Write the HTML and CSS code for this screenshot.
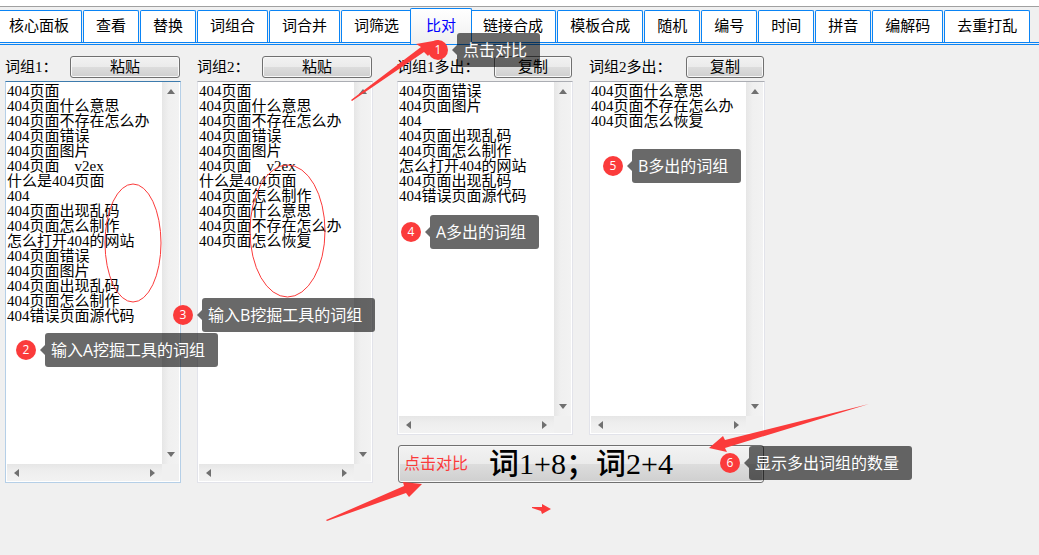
FILE: index.html
```html
<!DOCTYPE html>
<html lang="zh-CN">
<head>
<meta charset="utf-8">
<title>比对</title>
<link rel="stylesheet" href="styles.css">
</head>
<body>
<svg class="symbols" aria-hidden="true">
  <symbol id="up" viewBox="0 0 8 5"><path d="M0 5 4 0 8 5z"/></symbol>
  <symbol id="down" viewBox="0 0 8 5"><path d="M0 0h8L4 5z"/></symbol>
  <symbol id="left" viewBox="0 0 5 8"><path d="M5 0v8L0 4z"/></symbol>
  <symbol id="right" viewBox="0 0 5 8"><path d="M0 0l5 4-5 4z"/></symbol>
</svg>

<nav class="tabs" role="tablist">
  <button class="tab" role="tab">核心面板</button>
  <button class="tab" role="tab">查看</button>
  <button class="tab" role="tab">替换</button>
  <button class="tab" role="tab">词组合</button>
  <button class="tab" role="tab">词合并</button>
  <button class="tab" role="tab">词筛选</button>
  <button class="tab tab-active" role="tab" aria-selected="true">比对</button>
  <button class="tab" role="tab">链接合成</button>
  <button class="tab" role="tab">模板合成</button>
  <button class="tab" role="tab">随机</button>
  <button class="tab" role="tab">编号</button>
  <button class="tab" role="tab">时间</button>
  <button class="tab" role="tab">拼音</button>
  <button class="tab" role="tab">编解码</button>
  <button class="tab" role="tab">去重打乱</button>
</nav>

<main class="board">
  <div class="pair">
    <section class="column">
      <div class="head"><label for="a">词组1：</label><button class="btn btn-paste">粘贴</button></div>
      <div class="frame frame-focus">
        <textarea class="words" id="a" rows="22" wrap="off" spellcheck="false">404页面
404页面什么意思
404页面不存在怎么办
404页面错误
404页面图片
404页面　v2ex
什么是404页面
404
404页面出现乱码
404页面怎么制作
怎么打开404的网站
404页面错误
404页面图片
404页面出现乱码
404页面怎么制作
404错误页面源代码</textarea>
        <div class="bar bar-v"><svg class="arrow-v"><use href="#up"/></svg><svg class="arrow-v"><use href="#down"/></svg></div>
        <div class="bar bar-h"><svg class="arrow-h"><use href="#left"/></svg><svg class="arrow-h"><use href="#right"/></svg></div>
      </div>
    </section>
    <section class="column">
      <div class="head"><label for="b">词组2：</label><button class="btn btn-paste">粘贴</button></div>
      <div class="frame">
        <textarea class="words" id="b" rows="22" wrap="off" spellcheck="false">404页面
404页面什么意思
404页面不存在怎么办
404页面错误
404页面图片
404页面　v2ex
什么是404页面
404页面怎么制作
404页面什么意思
404页面不存在怎么办
404页面怎么恢复</textarea>
        <div class="bar bar-v"><svg class="arrow-v"><use href="#up"/></svg><svg class="arrow-v"><use href="#down"/></svg></div>
        <div class="bar bar-h"><svg class="arrow-h"><use href="#left"/></svg><svg class="arrow-h"><use href="#right"/></svg></div>
      </div>
    </section>
  </div>

  <div class="result">
    <div class="pair">
      <section class="column">
        <div class="head"><label for="c">词组1多出：</label><button class="btn btn-copy">复制</button></div>
        <div class="frame">
          <textarea class="words" id="c" rows="22" wrap="off" spellcheck="false">404页面错误
404页面图片
404
404页面出现乱码
404页面怎么制作
怎么打开404的网站
404页面出现乱码
404错误页面源代码</textarea>
          <div class="bar bar-v"><svg class="arrow-v"><use href="#up"/></svg><svg class="arrow-v"><use href="#down"/></svg></div>
          <div class="bar bar-h"><svg class="arrow-h"><use href="#left"/></svg><svg class="arrow-h"><use href="#right"/></svg></div>
        </div>
      </section>
      <section class="column">
        <div class="head"><label for="d">词组2多出：</label><button class="btn btn-copy">复制</button></div>
        <div class="frame">
          <textarea class="words" id="d" rows="22" wrap="off" spellcheck="false">404页面什么意思
404页面不存在怎么办
404页面怎么恢复</textarea>
          <div class="bar bar-v"><svg class="arrow-v"><use href="#up"/></svg><svg class="arrow-v"><use href="#down"/></svg></div>
          <div class="bar bar-h"><svg class="arrow-h"><use href="#left"/></svg><svg class="arrow-h"><use href="#right"/></svg></div>
        </div>
      </section>
    </div>
    <button class="btn btn-compare">词1+8；词2+4</button>
  </div>
</main>

<div class="notes">
  <svg class="marks" width="1039" height="555" aria-hidden="true">
    <g fill="none" stroke="#fb3b3b">
      <ellipse cx="133" cy="243" rx="28" ry="59"/>
      <ellipse cx="287.5" cy="231" rx="37.5" ry="66"/>
    </g>
    <g fill="#fb3b3b">
      <path d="M351 100 421 47 416 44 439 40 428 56 424 52 352 101z"/>
      <path d="M326 520 404 486 403 482 422 484 409 497 406 493 327 521z"/>
      <path d="M869 404 725 440 723 436 709 448 727 452 725 448z"/>
      <path d="M532 507 542 507 542 504 551 509 542 514 541 511 532 508z"/>
    </g>
  </svg>
  <span class="hint">点击对比</span>
  <div class="note note-1"><b class="num">1</b><span class="tip">点击对比</span></div>
  <div class="note note-2"><b class="num">2</b><span class="tip">输入A挖掘工具的词组</span></div>
  <div class="note note-3"><b class="num">3</b><span class="tip">输入B挖掘工具的词组</span></div>
  <div class="note note-4"><b class="num">4</b><span class="tip">A多出的词组</span></div>
  <div class="note note-5"><b class="num">5</b><span class="tip">B多出的词组</span></div>
  <div class="note note-6"><b class="num">6</b><span class="tip">显示多出词组的数量</span></div>
</div>
</body>
</html>
```
FILE: styles.css
```css
* { box-sizing: border-box; }

body {
  margin: 0;
  position: relative;
  min-height: 100vh;
  overflow: hidden;
  background: #f0f0f0;
  color: #000;
  font: 15px/15px "Liberation Serif", "Noto Sans CJK SC", serif;
}

button, textarea { font: inherit; color: inherit; margin: 0; }

.symbols { position: absolute; width: 0; height: 0; }

/* tab strip */
.tabs {
  display: flex;
  align-items: flex-end;
  gap: 1px;
  height: 39px;
  margin-top: 6px;
  border-top: 1px solid #a0a0a0;
  border-bottom: 3px double #0a84f5;
  box-shadow: 0 -6px 0 #fff;
}
.tab {
  flex: none;
  height: 32px;
  padding: 0 12px;
  background: #fff;
  border: 1px solid #0a84f5;
  border-bottom: 0;
  border-radius: 2px 2px 0 0;
  white-space: nowrap;
}
.tab:first-child { margin-left: -4px; }
.tab-active {
  z-index: 1;
  height: 36px;
  margin: 0 -3px -2px;
  padding: 0 15px;
  background: linear-gradient(#fff, #efefef);
  color: #00f;
}

/* word lists */
.board {
  display: flex;
  gap: 24px;
  padding: 10px 5px;
}
.pair { display: flex; gap: 16px; }
.column { display: flex; flex-direction: column; width: 176px; }
.head {
  display: flex;
  justify-content: space-between;
  align-items: center;
  height: 24px;
  margin-bottom: 2px;
  padding-right: 1px;
  white-space: nowrap;
}
.btn {
  border: 1px solid #707070;
  border-radius: 3px;
  background: linear-gradient(#f2f2f2, #ebebeb 50%, #dddddd 50%, #cfcfcf);
  box-shadow: inset 0 0 0 1px #f8f8f8;
  padding: 0;
}
.btn-paste { width: 110px; height: 22px; }
.btn-copy { width: 78px; height: 22px; }
.btn-compare {
  height: 38px;
  margin: 10px 1px 0;
  font-size: 30px;
  line-height: 34px;
  font-weight: 500;
}
.result { display: flex; flex-direction: column; }

.frame {
  flex: 1;
  display: grid;
  grid-template: 1fr 17px / 1fr 17px;
  padding: 0 1px 1px;
  border: 1px solid #e2e3ea;
  border-top-color: #abadb3;
  background: #f0f0f0;
  box-shadow: inset 0 0 0 1px #fff;
}
.frame-focus { border-color: #b5cfe7; border-top-color: #3d7bad; }
.words {
  width: 100%;
  height: 100%;
  padding: 2px 0;
  border: 0;
  outline: 0;
  resize: none;
  overflow: hidden;
  background: #fff;
}
.bar { display: flex; justify-content: space-between; align-items: center; fill: #707070; }
.bar-v {
  flex-direction: column;
  padding: 7px 0;
  background: linear-gradient(to right, #e6e6e6, #f0f0f0 40%, #f2f2f2);
}
.bar-h {
  padding: 0 7px;
  background: linear-gradient(#e6e6e6, #eeeeee 40%, #f2f2f2);
}
.arrow-v { width: 8px; height: 5px; }
.arrow-h { width: 5px; height: 8px; }

/* tutorial annotations pinned over the window */
.notes { position: absolute; inset: 0; pointer-events: none; z-index: 2; }
.marks { position: absolute; left: 0; top: 0; }
.hint, .tip {
  font: 16px/34px "Open Sans", "Noto Sans CJK SC", sans-serif;
  white-space: nowrap;
}
.hint { position: absolute; left: 404px; top: 446px; color: #fb3b3b; }
.note { position: absolute; display: flex; align-items: center; gap: 9px; }
.num {
  width: 20px;
  height: 20px;
  border-radius: 50%;
  background: #fb3b3b;
  color: #fff;
  font: 12px/20px "Open Sans", sans-serif;
  text-align: center;
}
.tip {
  position: relative;
  height: 34px;
  padding: 0 13px 0 6px;
  border-radius: 3px;
  background: rgba(0, 0, 0, 0.59);
  color: #fff;
}
.tip::before {
  content: "";
  position: absolute;
  left: -5px;
  top: 12px;
  border: 5px solid transparent;
  border-left: 0;
  border-right-color: rgba(0, 0, 0, 0.59);
}
.note-1 { left: 428px; top: 33px; }
.note-2 { left: 16px; top: 333px; }
.note-3 { left: 173px; top: 298px; }
.note-4 { left: 401px; top: 215px; }
.note-5 { left: 603px; top: 149px; }
.note-6 { left: 720px; top: 446px; }
```
